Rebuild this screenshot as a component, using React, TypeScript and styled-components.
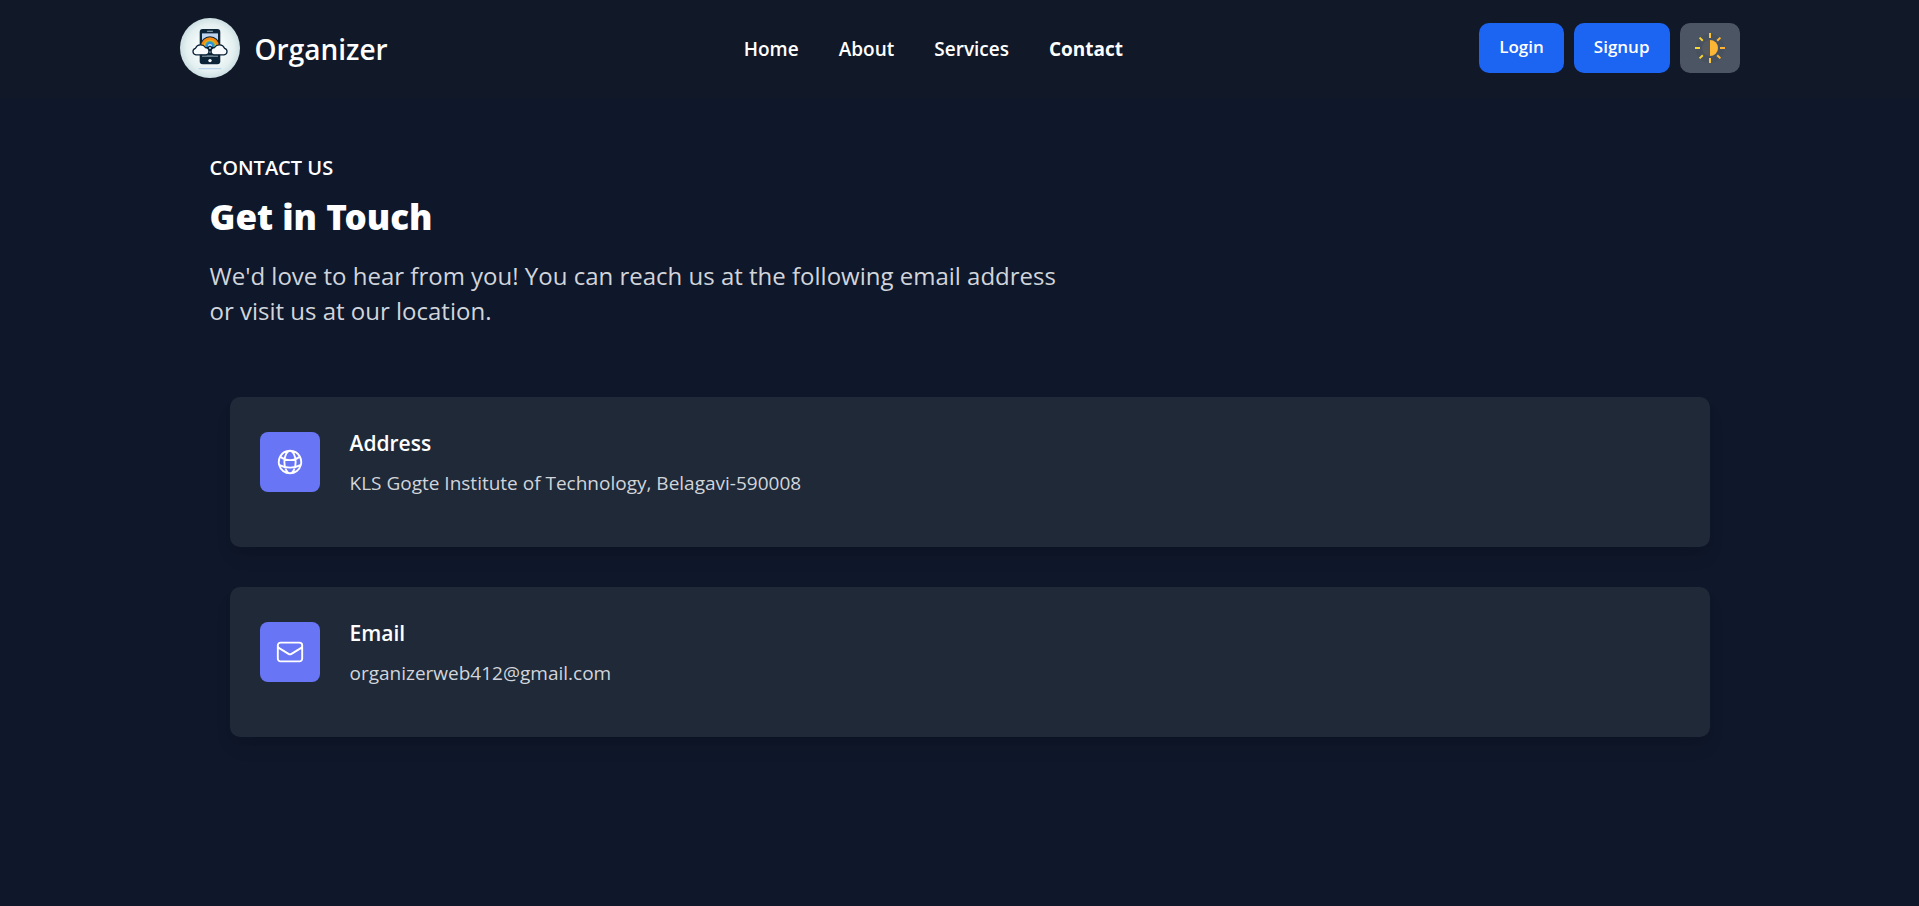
import React from 'react';
import styled, { createGlobalStyle } from 'styled-components';

const GlobalStyle = createGlobalStyle`
  *, *::before, *::after {
    box-sizing: border-box;
  }
  body {
    margin: 0;
    background: #0f172a;
    color: #fff;
    font-family: 'Open Sans', 'Noto Sans', sans-serif;
  }
  h1, h2, p, ul {
    margin: 0;
    padding: 0;
  }
`;

const Header = styled.header`
  background: #111827;
`;

const HeaderInner = styled.div`
  max-width: 1600px;
  margin: 0 auto;
  padding: 18px 20px 20px;
  display: flex;
  align-items: center;
  justify-content: space-between;
`;

const Brand = styled.a`
  display: flex;
  align-items: center;
  gap: 15px;
  color: #fff;
  text-decoration: none;
`;

const BrandName = styled.span`
  padding-top: 2px;
  font-size: 28px;
  line-height: 40px;
  font-weight: 600;
`;

const Nav = styled.nav`
  padding-top: 2px;
`;

const NavList = styled.ul`
  display: flex;
  gap: 40px;
  list-style: none;
`;

const NavLink = styled.a<{ $active?: boolean }>`
  display: block;
  color: #fff;
  font-size: 19px;
  line-height: 30px;
  font-weight: ${({ $active }) => ($active ? 700 : 600)};
  text-decoration: none;
`;

const Actions = styled.div`
  display: flex;
  gap: 10px;
`;

const ActionButton = styled.button`
  height: 50px;
  padding: 9px 20px 11px;
  border: 0;
  border-radius: 10px;
  background: #1c64f2;
  color: #fff;
  font-family: inherit;
  font-size: 17px;
  line-height: 30px;
  font-weight: 600;
  cursor: pointer;
`;

const ThemeButton = styled.button`
  display: flex;
  align-items: center;
  justify-content: center;
  width: 60px;
  height: 50px;
  padding: 0;
  border: 0;
  border-radius: 10px;
  background: #4b5563;
  cursor: pointer;
`;

const Main = styled.main`
  max-width: 1600px;
  margin: 0 auto;
  padding: 55px 50px 80px;
`;

const Eyebrow = styled.p`
  font-size: 20px;
  line-height: 30px;
  font-weight: 600;
  text-transform: uppercase;
`;

const Title = styled.h1`
  margin-top: 14px;
  font-family: 'Noto Sans', 'Open Sans', sans-serif;
  font-size: 35px;
  line-height: 40px;
  font-weight: 900;
`;

const Lead = styled.p`
  max-width: 860px;
  margin-top: 21px;
  color: #d1d5db;
  font-size: 24px;
  line-height: 35px;
`;

const CardList = styled.div`
  display: grid;
  gap: 40px;
  margin-top: 69px;
  padding-left: 20px;
`;

const Card = styled.section`
  display: flex;
  align-items: flex-start;
  gap: 30px;
  padding: 31px 30px 49px;
  border-radius: 10px;
  background: #1f2937;
  box-shadow: 0 12px 19px -4px rgba(0, 0, 0, 0.1), 0 5px 8px -2px rgba(0, 0, 0, 0.05);
`;

const IconTile = styled.div`
  display: flex;
  align-items: center;
  justify-content: center;
  flex-shrink: 0;
  width: 60px;
  height: 60px;
  margin-top: 4px;
  border-radius: 8px;
  background: #6875f5;
`;

const CardTitle = styled.h2`
  font-size: 21px;
  line-height: 30px;
  font-weight: 600;
`;

const CardText = styled.p`
  margin-top: 10px;
  color: #d1d5db;
  font-size: 19px;
  line-height: 30px;
`;

const cloud =
  'M3.6 11.6a3.3 3.3 0 0 1-.5-6.5A5.6 5.6 0 0 1 13 4.3a3.7 3.7 0 0 1 .7 7.3z';

function Logo() {
  return (
    <svg width="60" height="60" viewBox="0 0 60 60" aria-hidden="true">
      <defs>
        <radialGradient id="badge">
          <stop offset="0.45" stopColor="#f4fafa" />
          <stop offset="0.8" stopColor="#e3eff0" />
          <stop offset="1" stopColor="#cddfe3" />
        </radialGradient>
        <clipPath id="arc">
          <rect x="18" y="15" width="24" height="14" />
        </clipPath>
      </defs>
      <circle cx="30" cy="30" r="30" fill="url(#badge)" />
      <rect x="19.7" y="11" width="20.6" height="35.2" rx="3" fill="#0b2438" />
      <rect x="22" y="15.4" width="16" height="22" fill="#bdd4f0" />
      <rect x="27" y="12.8" width="6" height="1" rx="0.5" fill="#9fb4c4" />
      <g clipPath="url(#arc)">
        <circle cx="30" cy="28" r="9.8" fill="#0b2438" />
        <circle cx="30" cy="28" r="8.8" fill="#f5890f" />
        <circle cx="30" cy="28" r="6.2" fill="#e9b022" />
        <circle cx="30" cy="28" r="5.2" fill="#69b06a" />
        <circle cx="30" cy="28" r="4.2" fill="#2b8fe0" />
        <circle cx="30" cy="28" r="2" fill="#cfe6fa" />
      </g>
      <rect x="20" y="36" width="20" height="3" fill="#0b2438" />
      <rect x="22" y="37.6" width="16" height="0.9" fill="#c9dbe6" />
      <path d="M27 29l3-1.6 3 1.6v7h-6z" fill="#0b2438" />
      <circle cx="30" cy="30" r="0.9" fill="#e9f3fb" />
      <circle cx="30" cy="34" r="0.9" fill="#e9f3fb" />
      <path d={cloud} transform="translate(12.4 25.2)" fill="#f8fcff" stroke="#0b2438" strokeWidth="1.3" />
      <path d={cloud} transform="translate(47.6 25.2) scale(-1 1)" fill="#f8fcff" stroke="#0b2438" strokeWidth="1.3" />
      <circle cx="30" cy="42.6" r="1.7" fill="#f4fafa" />
      <rect x="18.5" y="50" width="23" height="1.3" rx="0.6" fill="#b9d6ee" />
    </svg>
  );
}

function SunIcon() {
  return (
    <svg width="30" height="30" viewBox="0 0 30 30" aria-hidden="true">
      <defs>
        <linearGradient id="rays" gradientUnits="userSpaceOnUse" x1="0" y1="0" x2="30" y2="0">
          <stop offset="0" stopColor="#f6dc35" />
          <stop offset="0.5" stopColor="#fcc433" />
          <stop offset="1" stopColor="#fdb034" />
        </linearGradient>
      </defs>
      <circle cx="15" cy="15.5" r="14.5" fill="#000" opacity="0.04" />
      <circle cx="15" cy="15" r="8" fill="#555960" />
      <path d="M15 7a8 8 0 0 1 0 16z" fill="#fdb734" />
      <path
        d="M15 0v5M15 25v5M0 15.01h5M25 15.01h5M4.6 4.6l3.2 3.2M22.2 22.2l3.2 3.2M4.6 25.4l3.2-3.2M22.2 7.8l3.2-3.2"
        fill="none"
        stroke="url(#rays)"
        strokeWidth="2"
      />
    </svg>
  );
}

function OutlineIcon({ path }: { path: string }) {
  return (
    <svg
      width="30"
      height="30"
      viewBox="0 0 24 24"
      fill="none"
      stroke="#fff"
      strokeWidth="1.5"
      strokeLinecap="round"
      strokeLinejoin="round"
      aria-hidden="true"
    >
      <path d={path} />
    </svg>
  );
}

const globePath =
  'M12 21a9.004 9.004 0 0 0 8.716-6.747M12 21a9.004 9.004 0 0 1-8.716-6.747M12 21c2.485 0 4.5-4.03 4.5-9S14.485 3 12 3m0 18c-2.485 0-4.5-4.03-4.5-9S9.515 3 12 3m0 0a8.997 8.997 0 0 1 7.843 4.582M12 3a8.997 8.997 0 0 0-7.843 4.582m15.686 0A11.953 11.953 0 0 1 12 10.5c-2.998 0-5.74-1.1-7.843-2.918m15.686 0A8.959 8.959 0 0 1 21 12c0 .778-.099 1.533-.284 2.253m0 0A17.919 17.919 0 0 1 12 16.5c-3.162 0-6.133-.815-8.716-2.247m0 0A9.015 9.015 0 0 1 3 12c0-1.605.42-3.113 1.157-4.418';

const mailPath =
  'M21.75 6.75v10.5a2.25 2.25 0 0 1-2.25 2.25h-15a2.25 2.25 0 0 1-2.25-2.25V6.75m19.5 0A2.25 2.25 0 0 0 19.5 4.5h-15a2.25 2.25 0 0 0-2.25 2.25m19.5 0v.243a2.25 2.25 0 0 1-1.07 1.916l-7.5 4.615a2.25 2.25 0 0 1-2.36 0L3.32 8.91a2.25 2.25 0 0 1-1.07-1.916V6.75';

const links = ['Home', 'About', 'Services', 'Contact'];

const contacts = [
  { title: 'Address', text: 'KLS Gogte Institute of Technology, Belagavi-590008', icon: globePath },
  { title: 'Email', text: 'organizerweb412@gmail.com', icon: mailPath },
];

export default function App() {
  return (
    <>
      <GlobalStyle />
      <Header>
        <HeaderInner>
          <Brand href="#home">
            <Logo />
            <BrandName>Organizer</BrandName>
          </Brand>
          <Nav>
            <NavList>
              {links.map((label) => (
                <li key={label}>
                  <NavLink href={`#${label.toLowerCase()}`} $active={label === 'Contact'}>
                    {label}
                  </NavLink>
                </li>
              ))}
            </NavList>
          </Nav>
          <Actions>
            <ActionButton type="button">Login</ActionButton>
            <ActionButton type="button">Signup</ActionButton>
            <ThemeButton type="button" aria-label="Toggle theme">
              <SunIcon />
            </ThemeButton>
          </Actions>
        </HeaderInner>
      </Header>
      <Main>
        <Eyebrow>Contact us</Eyebrow>
        <Title>Get in Touch</Title>
        <Lead>
          We'd love to hear from you! You can reach us at the following email address or visit us at
          our location.
        </Lead>
        <CardList>
          {contacts.map(({ title, text, icon }) => (
            <Card key={title}>
              <IconTile>
                <OutlineIcon path={icon} />
              </IconTile>
              <div>
                <CardTitle>{title}</CardTitle>
                <CardText>{text}</CardText>
              </div>
            </Card>
          ))}
        </CardList>
      </Main>
    </>
  );
}
